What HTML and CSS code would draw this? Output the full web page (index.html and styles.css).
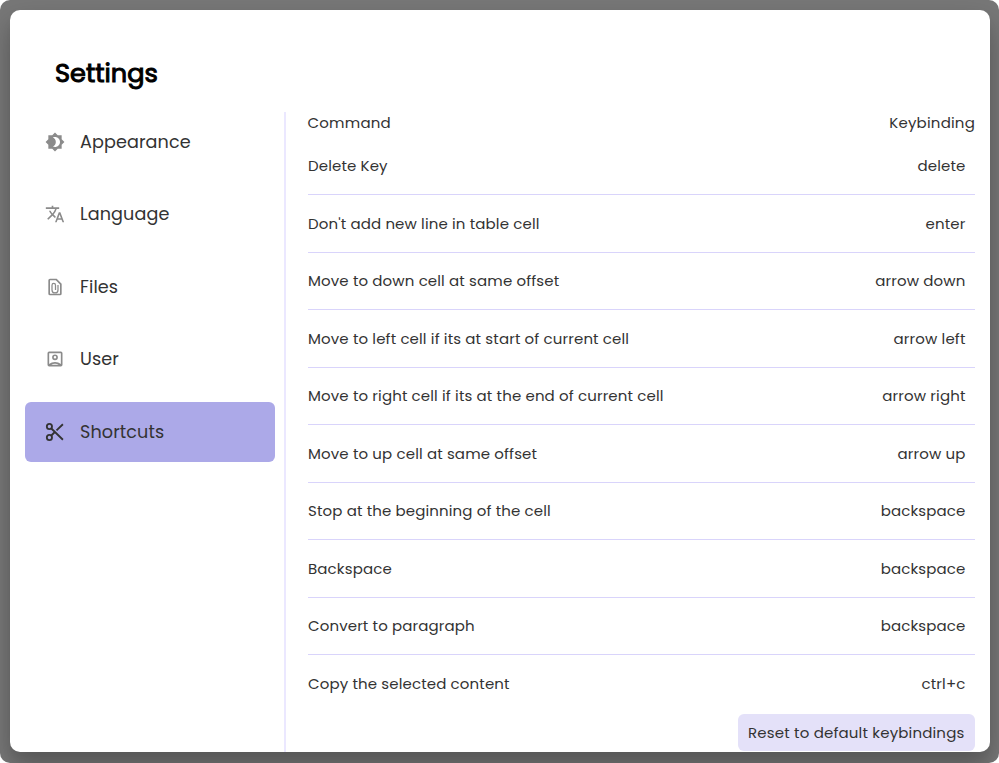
FILE: index.html
```html
<!DOCTYPE html>
<html lang="en">
<head>
<meta charset="utf-8">
<title>Settings</title>
<link rel="stylesheet" href="styles.css">
</head>
<body>
<div class="backdrop">
<main class="modal">
  <h1 class="title">Settings</h1>
  <div class="content">
    <nav class="sidebar">
      <a class="item"><svg viewBox="0 0 24 24"><path d="M20 8.69V4h-4.69L12 .69 8.69 4H4v4.69L.69 12 4 15.31V20h4.69L12 23.31 15.31 20H20v-4.69L23.31 12 20 8.69zM12 18c-.89 0-1.74-.2-2.5-.55C11.56 16.5 13 14.42 13 12s-1.44-4.5-3.5-5.45C10.26 6.2 11.11 6 12 6c3.31 0 6 2.69 6 6s-2.69 6-6 6z"/></svg><span>Appearance</span></a>
      <a class="item"><svg viewBox="0 0 24 24"><path d="M12.87 15.07l-2.54-2.51.03-.03A17.52 17.52 0 0 0 14.07 6H17V4h-7V2H8v2H1v1.99h11.17C11.5 7.92 10.44 9.75 9 11.35 8.07 10.32 7.3 9.19 6.69 8h-2c.73 1.63 1.73 3.17 2.98 4.56l-5.09 5.02L4 19l5-5 3.11 3.11.76-2.04zM18.5 10h-2L12 22h2l1.12-3h4.75L21 22h2l-4.5-12zm-2.62 7l1.62-4.33L19.12 17h-3.24z"/></svg><span>Language</span></a>
      <a class="item"><svg viewBox="0 0 24 24"><path d="M14 2H6a2 2 0 0 0-2 2v16a2 2 0 0 0 2 2h12a2 2 0 0 0 2-2V8l-6-6zM6 20V4h7l5 5v11H6z"/><path class="line" d="M15.6 9.5v6a3.6 3.6 0 0 1-7.2 0v-5.7a2.1 2.1 0 0 1 4.2 0v5.7"/></svg><span>Files</span></a>
      <a class="item"><svg viewBox="0 0 24 24"><path d="M19 3H5a2 2 0 0 0-2 2v14a2 2 0 0 0 2 2h14a2 2 0 0 0 2-2V5a2 2 0 0 0-2-2zM7.5 19c1.2-.9 2.8-1.4 4.5-1.4s3.3.5 4.5 1.4h-9zM19 18.1C17.2 16.6 14.7 15.6 12 15.6s-5.2 1-7 2.5V5h14v13.1zM12 6.5a3.5 3.5 0 1 0 0 7 3.5 3.5 0 0 0 0-7zm0 5a1.5 1.5 0 1 1 0-3 1.5 1.5 0 0 1 0 3z"/></svg><span>User</span></a>
      <a class="item active"><svg viewBox="0 0 24 24"><g class="line"><circle cx="5.3" cy="5.4" r="3.1"/><circle cx="5.3" cy="18.6" r="3.1"/><path d="M7.6 7.8L21.5 21.3M7.6 16.2l4.2-4.2M13.8 10L21.5 2.7"/></g></svg><span>Shortcuts</span></a>
    </nav>
    <section class="panel">
      <div class="head"><span>Command</span><span>Keybinding</span></div>
      <ul class="rows">
        <li><span>Delete Key</span><kbd>delete</kbd></li>
        <li><span>Don't add new line in table cell</span><kbd>enter</kbd></li>
        <li><span>Move to down cell at same offset</span><kbd>arrow down</kbd></li>
        <li><span>Move to left cell if its at start of current cell</span><kbd>arrow left</kbd></li>
        <li><span>Move to right cell if its at the end of current cell</span><kbd>arrow right</kbd></li>
        <li><span>Move to up cell at same offset</span><kbd>arrow up</kbd></li>
        <li><span>Stop at the beginning of the cell</span><kbd>backspace</kbd></li>
        <li><span>Backspace</span><kbd>backspace</kbd></li>
        <li><span>Convert to paragraph</span><kbd>backspace</kbd></li>
        <li><span>Copy the selected content</span><kbd>ctrl+c</kbd></li>
      </ul>
      <button class="reset">Reset to default keybindings</button>
    </section>
  </div>
</main>
</div>
</body>
</html>
```
FILE: styles.css
```css
* { box-sizing: border-box; }
body { margin: 0; background: #fff; font-family: Poppins, Inter, sans-serif; color: #333; }
.backdrop { height: 763px; padding: 10px 9px 11px 10px; border-radius: 10px; background: #777; overflow: hidden; }
.modal { height: 742px; border-radius: 10px; background: #fff; overflow: hidden; box-shadow: 0 14px 28px rgba(0,0,0,.25), 0 10px 10px rgba(0,0,0,.05); }
.title { margin: 0; height: 102px; padding: 44px 0 0 45px; font-size: 25.6px; line-height: 38px; font-weight: 400; -webkit-text-stroke: 1px #000; color: #000; }
.content { display: flex; height: 640px; }
.sidebar { width: 276px; flex: none; padding: 0 11px 0 15px; border-right: 2px solid #ebe8ff; display: flex; flex-direction: column; gap: 12.4px; }
.item { width: 250px; height: 60px; flex: none; border-radius: 6px; padding-left: 20px; display: flex; align-items: center; gap: 15px; font-size: 17.6px; line-height: 26px; letter-spacing: .1px; }
.item svg { width: 20px; height: 20px; fill: #8b8b8b; }
.line { fill: none; stroke: #8b8b8b; stroke-width: 1.5; }
.active { background: #aca9e8; }
.active .line { stroke: #333; stroke-width: 2.2; }
.panel { flex: 1; padding: 0 15px 0 22px; display: flex; flex-direction: column; font-size: 15px; letter-spacing: .13px; }
.head { height: 25.7px; flex: none; display: flex; justify-content: space-between; line-height: 22px; margin-left: -.5px; letter-spacing: .2px; }
.rows { list-style: none; margin: 0; padding: 0; height: 576.8px; overflow: hidden; flex: none; }
.rows li { height: 57.5px; line-height: 22px; display: flex; align-items: center; justify-content: space-between; padding: 1px 9.5px 0 0; border-bottom: 1px solid #d9d4fb; }
.rows li:last-child { border-bottom-color: transparent; }
kbd { font: inherit; }
.reset { align-self: flex-end; width: 237.5px; height: 37px; border: 0; border-radius: 6px; padding: 0 0 1px; background: #e4e1f9; color: #333; font: inherit; letter-spacing: .17px; white-space: nowrap; }
```
